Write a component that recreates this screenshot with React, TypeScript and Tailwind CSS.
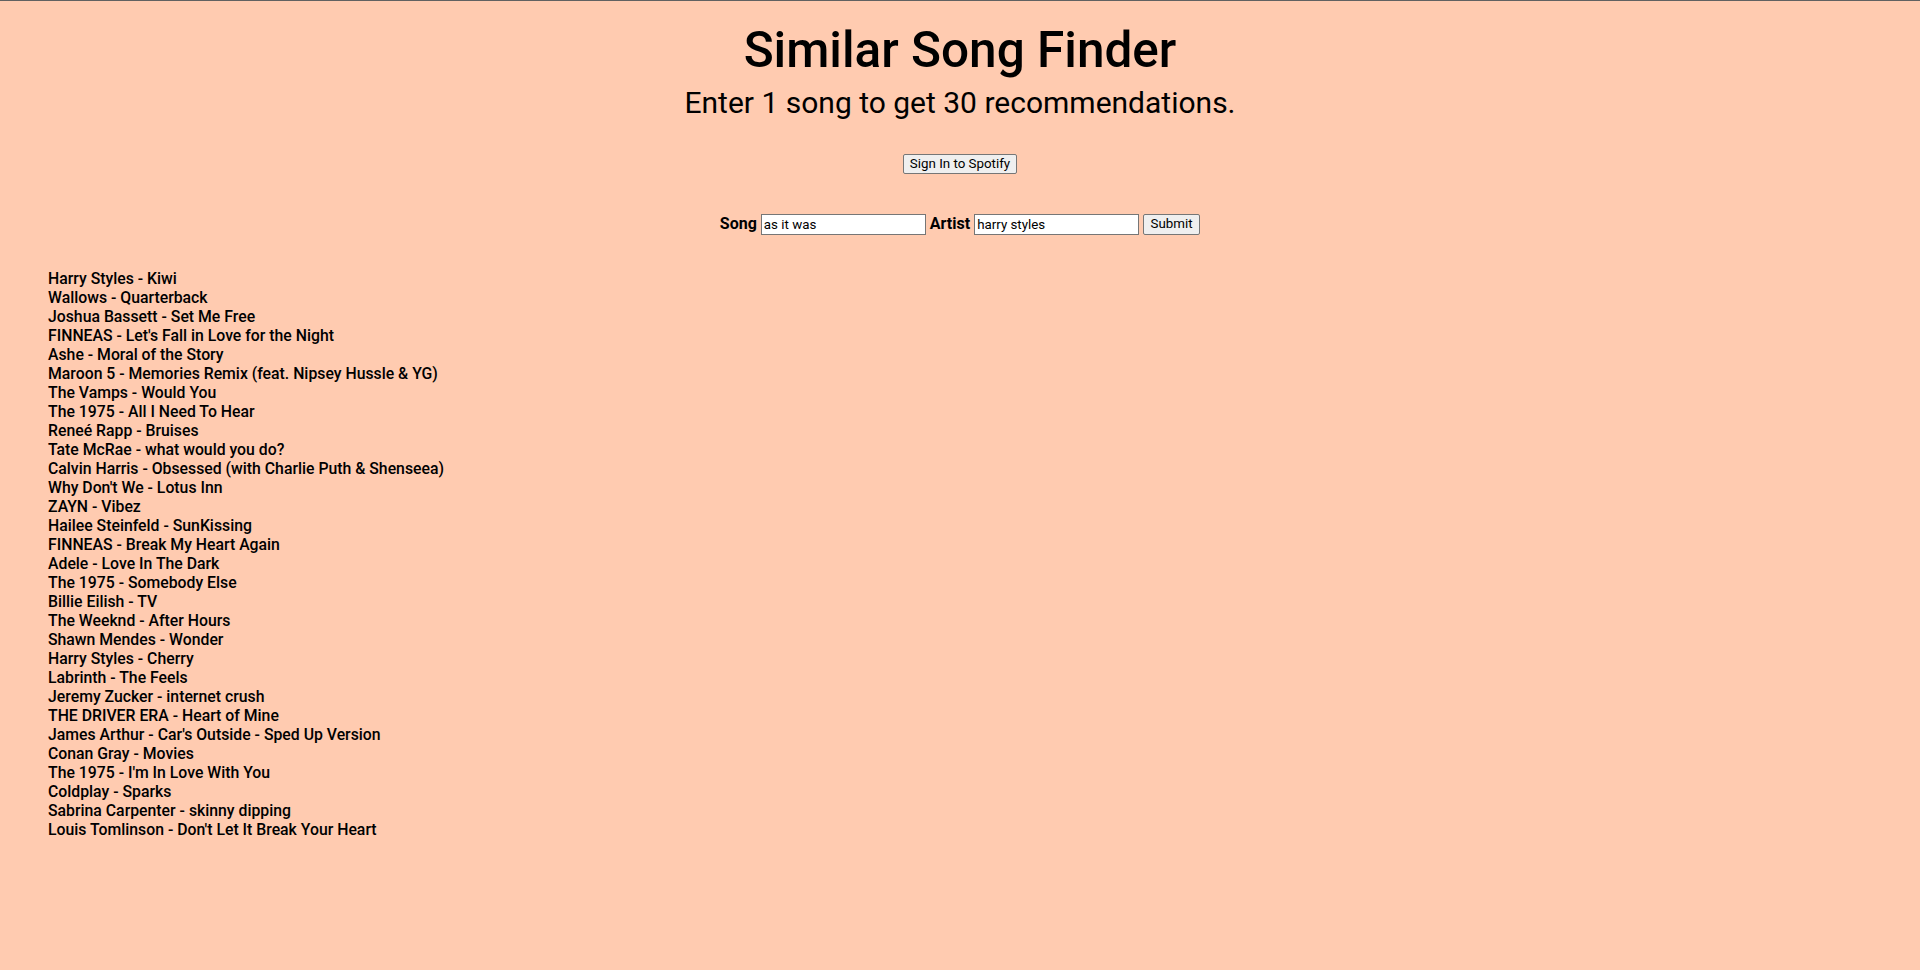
const SONGS = [
  'Harry Styles - Kiwi',
  'Wallows - Quarterback',
  'Joshua Bassett - Set Me Free',
  "FINNEAS - Let's Fall in Love for the Night",
  'Ashe - Moral of the Story',
  'Maroon 5 - Memories Remix (feat. Nipsey Hussle & YG)',
  'The Vamps - Would You',
  'The 1975 - All I Need To Hear',
  'Reneé Rapp - Bruises',
  'Tate McRae - what would you do?',
  'Calvin Harris - Obsessed (with Charlie Puth & Shenseea)',
  "Why Don't We - Lotus Inn",
  'ZAYN - Vibez',
  'Hailee Steinfeld - SunKissing',
  'FINNEAS - Break My Heart Again',
  'Adele - Love In The Dark',
  'The 1975 - Somebody Else',
  'Billie Eilish - TV',
  'The Weeknd - After Hours',
  'Shawn Mendes - Wonder',
  'Harry Styles - Cherry',
  'Labrinth - The Feels',
  'Jeremy Zucker - internet crush',
  'THE DRIVER ERA - Heart of Mine',
  "James Arthur - Car's Outside - Sped Up Version",
  'Conan Gray - Movies',
  "The 1975 - I'm In Love With You",
  'Coldplay - Sparks',
  'Sabrina Carpenter - skinny dipping',
  "Louis Tomlinson - Don't Let It Break Your Heart",
];

export default function App() {
  return (
    <div className="min-h-[970px] border-t border-[#616161] bg-[#ffcbb0] font-['Roboto',sans-serif] text-black">
      <header className="flex flex-col items-center">
        <h1 className="mt-[20px] text-[49.5px] leading-[59px] font-medium">Similar Song Finder</h1>
        <p className="mt-[5px] text-[30px] leading-[35px]">Enter 1 song to get 30 recommendations.</p>
        <button className="mt-[34px] h-[20px] rounded-[2px] border border-[#767676] bg-[#efefef] px-[6px] text-[13.33px] leading-none">
          Sign In to Spotify
        </button>
        <form
          className="mt-[38px] flex items-center gap-[4px]"
          onSubmit={(e) => e.preventDefault()}
        >
          <label className="text-[16px] font-bold">Song</label>
          <input
            defaultValue="as it was"
            className="h-[21px] w-[165px] border border-[#767676] bg-white px-[2px] text-[13.33px] outline-none"
          />
          <label className="text-[16px] font-bold">Artist</label>
          <input
            defaultValue="harry styles"
            className="h-[21px] w-[165px] border border-[#767676] bg-white px-[2px] text-[13.33px] outline-none"
          />
          <button className="h-[21px] w-[57px] rounded-[2px] border border-[#767676] bg-[#efefef] text-[13.33px] leading-none">
            Submit
          </button>
        </form>
      </header>

      <ul className="mt-[33px] ml-[48px] text-[15.8px] leading-[19px] font-medium">
        {SONGS.map((s, i) => (
          <li key={i}>{s}</li>
        ))}
      </ul>
    </div>
  );
}
